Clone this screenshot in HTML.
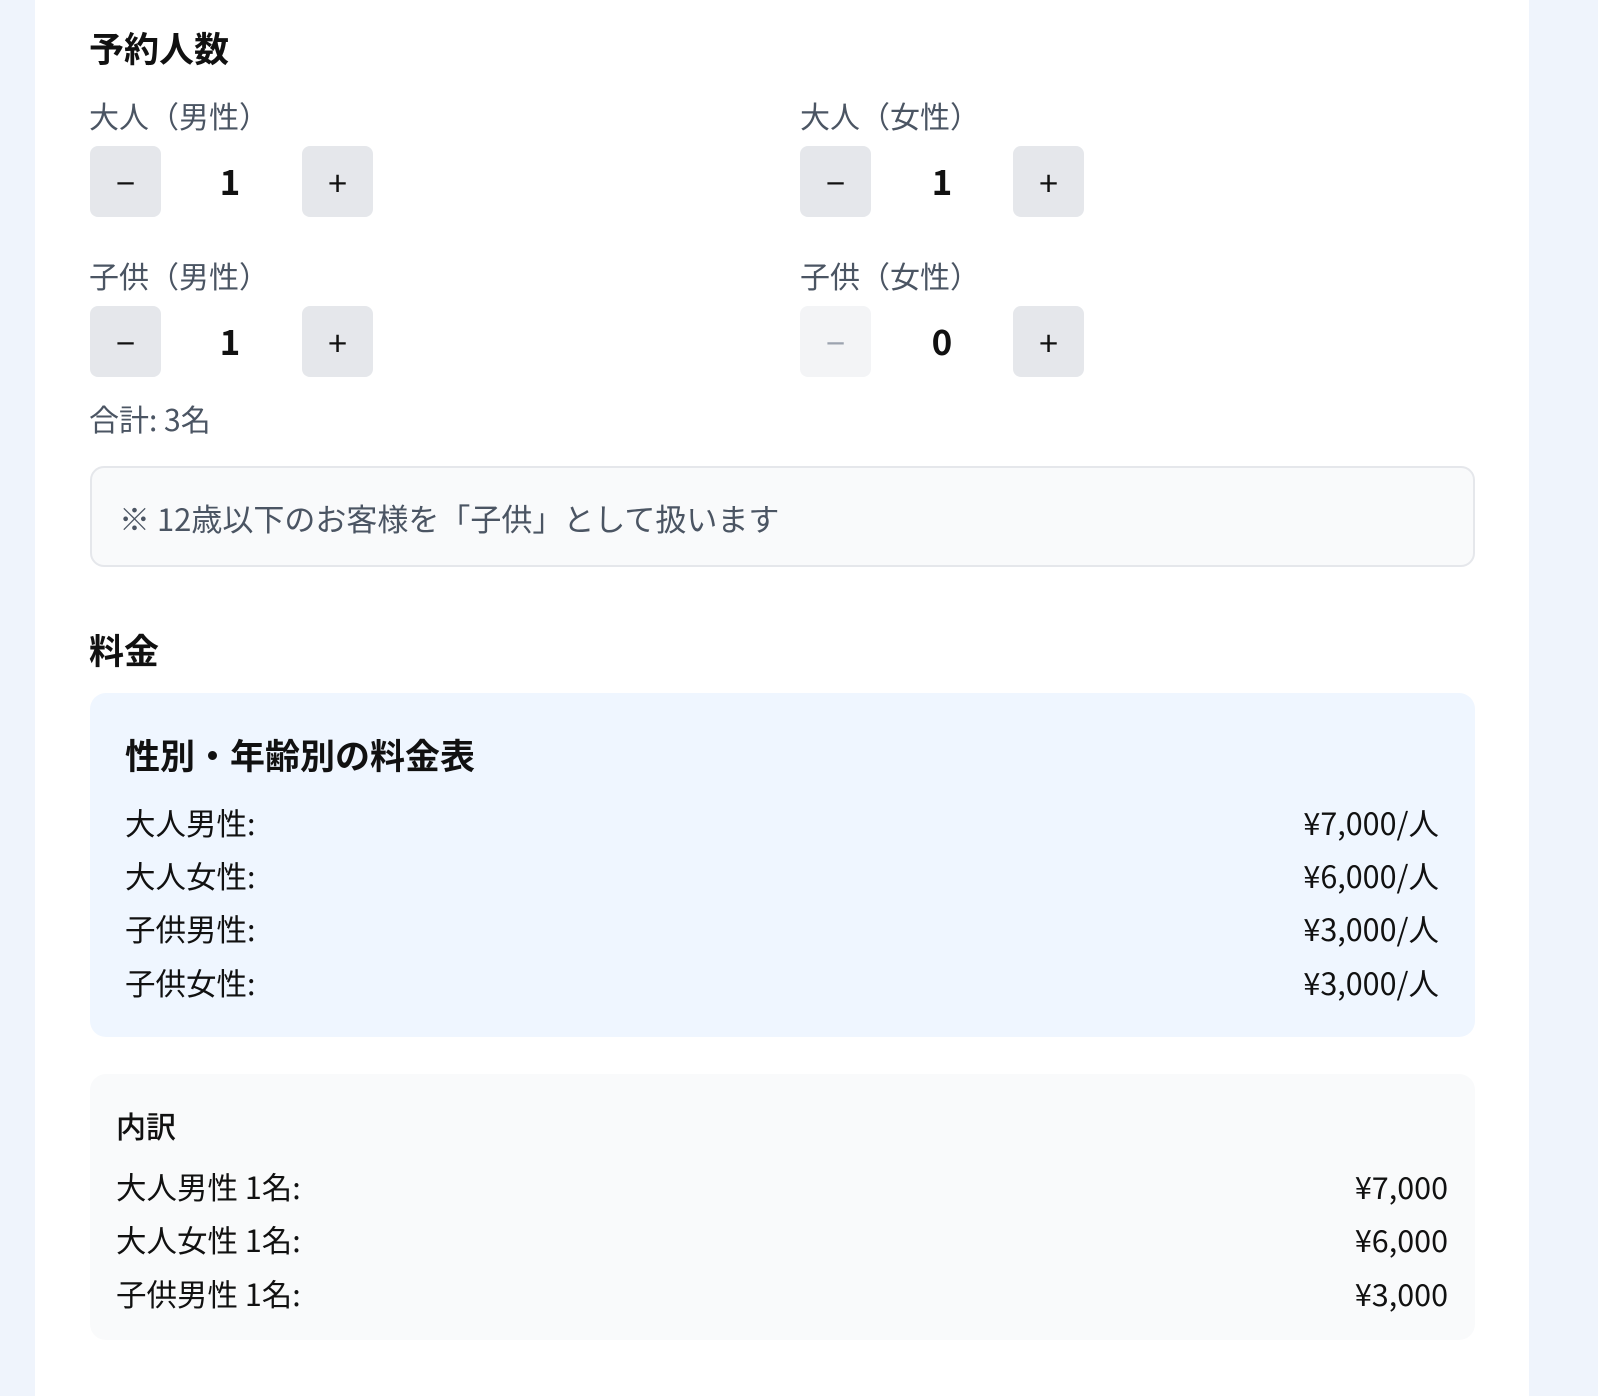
<!DOCTYPE html>
<html><head><meta charset="utf-8"><style>
*{margin:0;padding:0;box-sizing:border-box}
body{width:1598px;height:1396px;background:#eff4fc;font-family:"Noto Sans CJK JP","Liberation Sans",sans-serif;color:#111;position:relative;overflow:hidden}
.card{position:absolute;left:35px;top:0;width:1494px;height:1396px;background:#fff}
.a{position:absolute;white-space:nowrap;line-height:1}
h2{position:absolute;font-size:35px;font-weight:700;line-height:1}
.lbl{font-size:30px;color:#4b5563}
.btn{position:absolute;width:71px;height:71px;background:#e5e7eb;border-radius:8px;font-size:34px;display:flex;align-items:center;justify-content:center;color:#111;line-height:1}
.btn.dis{background:#f3f4f6;color:#9ca3af}
.num{position:absolute;width:60px;text-align:center;font-size:35px;font-weight:700;line-height:1}
.box{position:absolute;left:90px;width:1385px;border-radius:16px}
.row{font-size:30.5px;color:#111}
</style></head><body>
<div class="card"></div>
<h2 style="left:89px;top:30px">予約人数</h2>

<div class="a lbl" style="left:89px;top:100px">大人（男性）</div>
<div class="btn" style="left:90px;top:146px">−</div>
<div class="num" style="left:200px;top:163px">1</div>
<div class="btn" style="left:302px;top:146px">+</div>

<div class="a lbl" style="left:800px;top:100px">大人（女性）</div>
<div class="btn" style="left:800px;top:146px">−</div>
<div class="num" style="left:912px;top:163px">1</div>
<div class="btn" style="left:1013px;top:146px">+</div>

<div class="a lbl" style="left:89px;top:260px">子供（男性）</div>
<div class="btn" style="left:90px;top:306px">−</div>
<div class="num" style="left:200px;top:323px">1</div>
<div class="btn" style="left:302px;top:306px">+</div>

<div class="a lbl" style="left:800px;top:260px">子供（女性）</div>
<div class="btn dis" style="left:800px;top:306px">−</div>
<div class="num" style="left:912px;top:323px">0</div>
<div class="btn" style="left:1013px;top:306px">+</div>

<div class="a lbl" style="left:89px;top:403px">合計: 3名</div>

<div class="box" style="top:466px;height:101px;background:#f9fafb;border:2px solid #e5e7eb;border-radius:14px"></div>
<div class="a lbl" style="left:119px;top:502px;font-size:31px">※ 12歳以下のお客様を「子供」として扱います</div>

<h2 style="left:89px;top:632px">料金</h2>

<div class="box" style="top:693px;height:344px;background:#eff6ff"></div>
<div class="a" style="left:125px;top:737px;font-size:35px;font-weight:700">性別・年齢別の料金表</div>
<div class="a row" style="left:125px;top:807px">大人男性:</div><div class="a row" style="right:159px;top:807px">¥7,000/人</div>
<div class="a row" style="left:125px;top:860px">大人女性:</div><div class="a row" style="right:159px;top:860px">¥6,000/人</div>
<div class="a row" style="left:125px;top:913px">子供男性:</div><div class="a row" style="right:159px;top:913px">¥3,000/人</div>
<div class="a row" style="left:125px;top:967px">子供女性:</div><div class="a row" style="right:159px;top:967px">¥3,000/人</div>

<div class="box" style="top:1074px;height:266px;background:#f9fafb"></div>
<div class="a" style="left:116px;top:1110px;font-size:30px;font-weight:500">内訳</div>
<div class="a row" style="left:116px;top:1171px">大人男性 1名:</div><div class="a row" style="right:150px;top:1171px">¥7,000</div>
<div class="a row" style="left:116px;top:1224px">大人女性 1名:</div><div class="a row" style="right:150px;top:1224px">¥6,000</div>
<div class="a row" style="left:116px;top:1278px">子供男性 1名:</div><div class="a row" style="right:150px;top:1278px">¥3,000</div>
</body></html>
